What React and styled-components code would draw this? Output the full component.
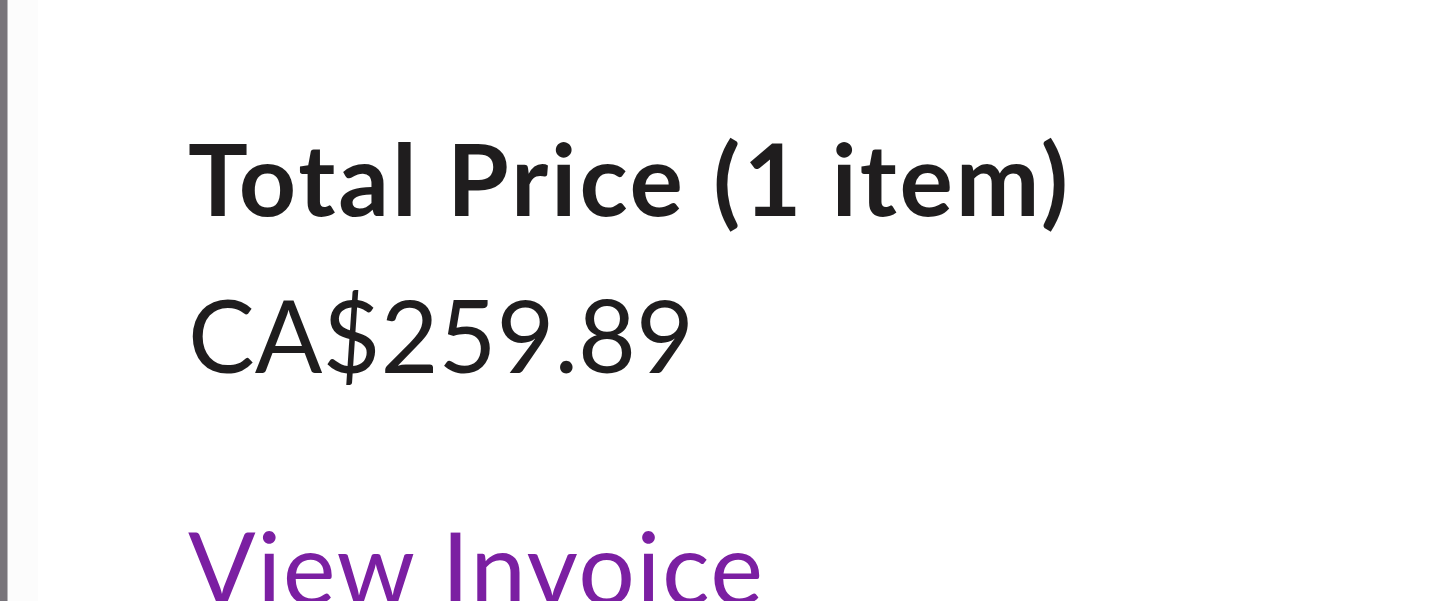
import styled, { createGlobalStyle } from 'styled-components';

const GlobalStyle = createGlobalStyle`
  html, body {
    margin: 0;
    padding: 0;
    background: #ffffff;
  }
  body {
    font-family: Lato, 'Liberation Sans', sans-serif;
    overflow: hidden;
  }
`;

const Page = styled.main`
  display: flex;
  width: 1440px;
  height: 601px;
  overflow: hidden;
`;

const Rail = styled.div`
  width: 7px;
  flex-shrink: 0;
  background: #78747a;
  border-right: 1px solid #b8b6ba;
`;

const Gutter = styled.div`
  width: 30px;
  flex-shrink: 0;
  background: #fcfcfc;
`;

const Summary = styled.section`
  padding-top: 99px;
  padding-left: 150px;
`;

const Title = styled.h1`
  margin: 0;
  font-size: 100px;
  line-height: 157px;
  font-weight: 700;
  letter-spacing: 2.9px;
  color: #1f1d1e;
  white-space: nowrap;
`;

const Price = styled.p`
  margin: 0;
  font-size: 100px;
  line-height: 157px;
  font-weight: 400;
  color: #1f1d1e;
  white-space: nowrap;
`;

const InvoiceLink = styled.a`
  display: block;
  margin-top: 75px;
  font-size: 100px;
  line-height: 157px;
  font-weight: 400;
  letter-spacing: 1.5px;
  color: #7b1fa2;
  text-decoration: none;
  white-space: nowrap;
  cursor: pointer;
`;

export default function App() {
  return (
    <Page>
      <GlobalStyle />
      <Rail />
      <Gutter />
      <Summary>
        <Title>Total Price (1 item)</Title>
        <Price>CA$259.89</Price>
        <InvoiceLink href="#invoice">View Invoice</InvoiceLink>
      </Summary>
    </Page>
  );
}
